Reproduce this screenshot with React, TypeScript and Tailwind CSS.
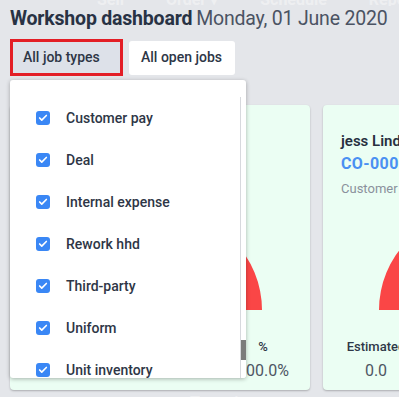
import { Check } from "lucide-react";

const JOB_TYPES = [
  "Customer pay",
  "Deal",
  "Internal expense",
  "Rework hhd",
  "Third-party",
  "Uniform",
  "Unit inventory",
];

const NAV = ["Sell", "Order ▾", "Schedule", "Reporting"];

function Gauge({ className }: { className: string }) {
  return (
    <svg width="200" height="100" viewBox="0 0 200 100" className={className}>
      <path d="M2 100 A98 98 0 0 1 198 100 L150 100 A50 50 0 0 0 50 100 Z" fill="#fa4646" />
    </svg>
  );
}

function JobCard({ name, code, type, stats }: {
  name: string;
  code: string;
  type: string;
  stats: { label: string; value: string }[];
}) {
  return (
    <div className="flex h-[285px] w-[300px] shrink-0 flex-col rounded-[4px] bg-[#ebfef3] shadow-[0_1px_2px_rgba(0,0,0,0.25)]">
      <div className="px-[18px] pt-[26px]">
        <div className="whitespace-nowrap text-[15px] leading-[20px] font-semibold text-[#27303f]">{name}</div>
        <div className="mt-[3px] whitespace-nowrap text-[16px] leading-[20px] font-bold tracking-wide text-[#4a90f2]">{code}</div>
        <div className="mt-[6px] whitespace-nowrap text-[13px] leading-[18px] text-[#8a919c]">{type}</div>
      </div>
      <div className="flex justify-center pt-[12px]">
        <Gauge className="ml-[8px]" />
      </div>
      <div className="grid grid-cols-[repeat(3,100px)] pl-[3px] pt-[28px]">
        {stats.map((s) => (
          <div key={s.label} className="flex flex-col items-center whitespace-nowrap">
            <span className="text-[13px] leading-[18px] font-medium text-[#2f3848]">{s.label}</span>
            <span className="mt-[5px] text-[16px] leading-[20px] text-[#4e5664]">{s.value}</span>
          </div>
        ))}
      </div>
    </div>
  );
}

export default function App() {
  return (
    <div className="relative h-[397px] w-[399px] overflow-hidden bg-[#e4e6ea] font-['Roboto',sans-serif]">
      <div className="h-[6px] overflow-hidden">
        <div className="-mt-[12px] flex gap-[42px] pl-[97px] text-[16px] font-bold whitespace-nowrap text-white/40">
          {NAV.map((n) => (
            <span key={n}>{n}</span>
          ))}
        </div>
      </div>

      <h1 className="ml-[10px] mt-[1px] whitespace-nowrap leading-[24px] text-[#283244]">
        <span className="text-[19.5px] font-bold tracking-[-0.2px]">Workshop dashboard</span>{" "}
        <span className="text-[19.5px] tracking-[-0.2px] text-[#4b5363]">Monday, 01 June 2020</span>
      </h1>

      <div className="ml-[10px] mt-[7px] flex items-center gap-[6px]">
        <button className="h-[37px] w-[113px] border-[3px] border-[#e31e26] bg-[#dde1e9] pl-[10px] text-left text-[14px] font-medium text-[#2d3646]">
          All job types
        </button>
        <button className="h-[34px] w-[106px] rounded-[3px] bg-white pl-[12px] text-left text-[14px] font-medium text-[#2d3646]">
          All open jobs
        </button>
      </div>

      <div className="ml-[10px] mt-[29px] flex gap-[13px]">
        <JobCard
          name="jess Lindqvist"
          code="CO-000041"
          type="Customer pay"
          stats={[
            { label: "Actual", value: "0.0" },
            { label: "Sold", value: "0.0" },
            { label: "%", value: "100.0%" },
          ]}
        />
        <JobCard
          name="jess Lindqvist"
          code="CO-000042"
          type="Customer pay"
          stats={[
            { label: "Estimated", value: "0.0" },
            { label: "Actual", value: "0.0" },
            { label: "%", value: "0.0%" },
          ]}
        />
      </div>

      <div className="mt-[1px] whitespace-nowrap pl-[190px] text-[16px] font-bold text-white/40">Tappointment</div>

      <div className="absolute left-[10px] top-[80px] flex h-[298px] w-[236px] overflow-hidden rounded-[3px] bg-white shadow-[0_1px_4px_rgba(0,0,0,0.3)]">
        <ul className="flex-1 pt-[17px]">
          {JOB_TYPES.map((t) => (
            <li key={t} className="flex h-[42px] items-center gap-[16px] pl-[26px]">
              <span className="flex h-[14px] w-[14px] items-center justify-center rounded-[3px] bg-[#3a87f5]">
                <Check size={10} strokeWidth={4} color="white" />
              </span>
              <span className="text-[14px] font-medium text-[#2e3646]">{t}</span>
            </li>
          ))}
        </ul>
        <div className="relative mt-[17px] w-[6px] border-l border-[#d7d9dd] bg-white">
          <div className="absolute bottom-[18px] left-0 h-[20px] w-[6px] bg-[#7b7b7b]" />
        </div>
      </div>
    </div>
  );
}
